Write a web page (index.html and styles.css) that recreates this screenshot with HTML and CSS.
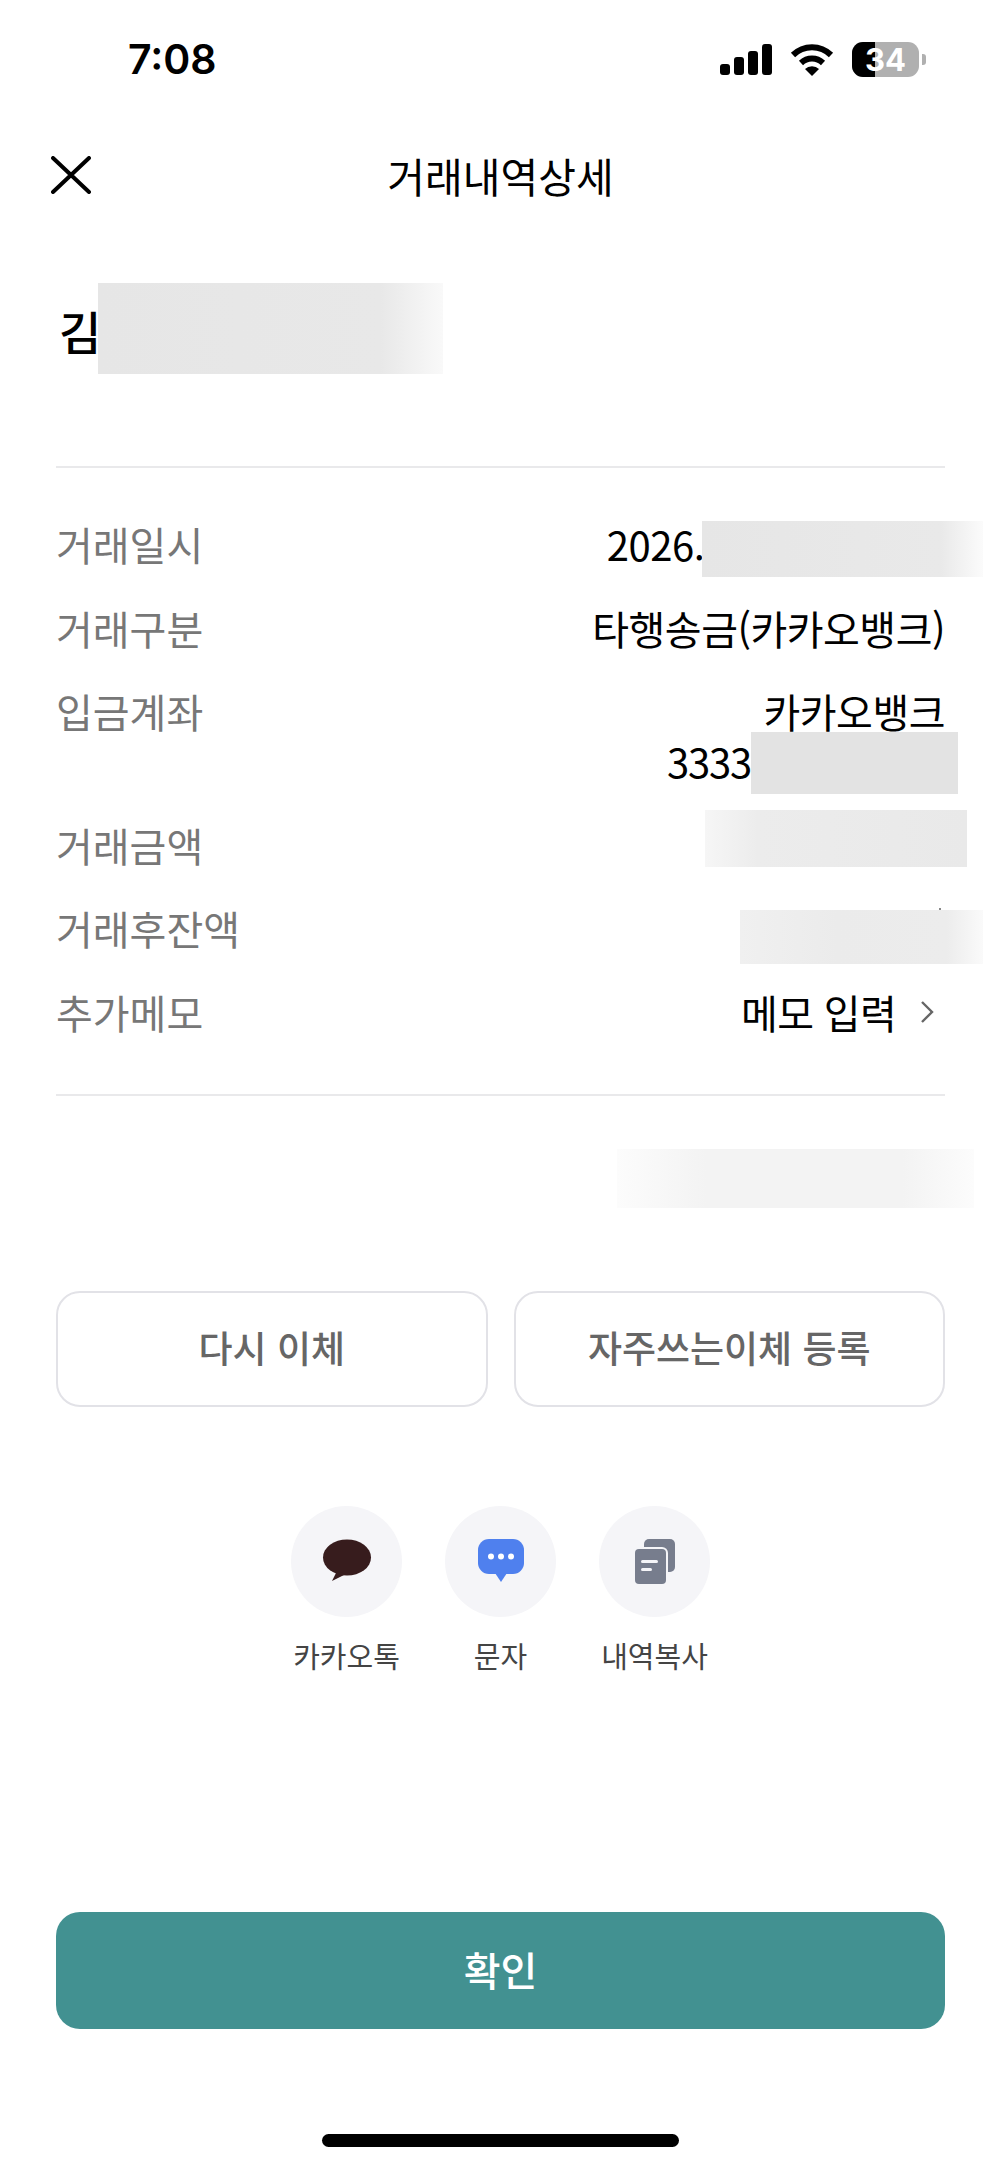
FILE: index.html

```html
<!DOCTYPE html>
<html lang="ko">
<head>
  <meta charset="UTF-8">
  <title>거래내역상세</title>
  <link rel="stylesheet" href="styles.css">
</head>
<body>
  <div class="page">

    <div class="status-bar">
      <span class="time">7:08</span>
      <div class="status-icons">
        <svg class="signal" width="52" height="31" viewBox="0 0 52 31">
          <rect x="0" y="20" width="10" height="11" rx="3"/>
          <rect x="14" y="13" width="10" height="18" rx="3"/>
          <rect x="28" y="7" width="10" height="24" rx="3"/>
          <rect x="42" y="0" width="10" height="31" rx="3"/>
        </svg>
        <svg class="wifi" width="44" height="33" viewBox="0 0 44 33">
          <path d="M3 12 A27 27 0 0 1 41 12" fill="none" stroke="#000" stroke-width="6"/>
          <path d="M11 20 A16 16 0 0 1 33 20" fill="none" stroke="#000" stroke-width="6"/>
          <path d="M15 26 A10 10 0 0 1 29 26 L22 33 Z" fill="#000"/>
        </svg>
        <div class="battery">
          <div class="battery-body">
            <div class="battery-fill"></div>
            <span class="battery-num">34</span>
          </div>
          <div class="battery-nub"></div>
        </div>
      </div>
    </div>

    <div class="header">
      <svg class="close" width="40" height="38" viewBox="0 0 40 38">
        <path d="M2 2 L38 36 M38 2 L2 36" fill="none" stroke="#000" stroke-width="4" stroke-linecap="round"/>
      </svg>
      <h1 class="title">거래내역상세</h1>
    </div>

    <div class="name">김</div>
    <div class="redact redact-name"></div>

    <hr class="line line-top">

    <div class="rows">
      <div class="row">
        <span class="label">거래일시</span>
        <span class="value value-date">2026.0</span>
      </div>
      <div class="row">
        <span class="label">거래구분</span>
        <span class="value">타행송금(카카오뱅크)</span>
      </div>
      <div class="row">
        <span class="label">입금계좌</span>
        <div class="value">
          <div>카카오뱅크</div>
          <div class="value-account">3333</div>
        </div>
      </div>
      <div class="row">
        <span class="label">거래금액</span>
      </div>
      <div class="row">
        <span class="label">거래후잔액</span>
      </div>
      <div class="row">
        <span class="label">추가메모</span>
        <span class="value memo">
          메모 입력
          <svg class="chevron" width="14" height="24" viewBox="0 0 14 24">
            <path d="M2 2 L12 12 L2 22" fill="none" stroke="#666" stroke-width="2.4"/>
          </svg>
        </span>
      </div>
    </div>

    <div class="redact redact-date"></div>
    <div class="redact redact-account"></div>
    <div class="redact redact-amount"></div>
    <div class="redact redact-balance"></div>
    <div class="redact redact-note"></div>

    <hr class="line line-bottom">

    <div class="actions">
      <button class="btn-outline">다시 이체</button>
      <button class="btn-outline">자주쓰는이체 등록</button>
    </div>

    <div class="share">
      <div class="share-item">
        <div class="share-circle">
          <svg width="50" height="44" viewBox="0 0 50 44">
            <ellipse cx="25" cy="18.500" rx="24" ry="18" fill="#371c1d"/>
            <path d="M15 32 L10 42 L24 35 Z" fill="#371c1d"/>
          </svg>
        </div>
        <span class="share-label">카카오톡</span>
      </div>
      <div class="share-item">
        <div class="share-circle">
          <svg width="46" height="44" viewBox="0 0 46 44">
            <rect x="0" y="0" width="46" height="35" rx="11" fill="#4f80ee"/>
            <path d="M17 34 L23 43 L29 34 Z" fill="#4f80ee"/>
            <circle cx="13" cy="17.500" r="3" fill="#fff"/>
            <circle cx="23" cy="17.500" r="3" fill="#fff"/>
            <circle cx="33" cy="17.500" r="3" fill="#fff"/>
          </svg>
        </div>
        <span class="share-label">문자</span>
      </div>
      <div class="share-item">
        <div class="share-circle">
          <svg width="40" height="45" viewBox="0 0 40 45">
            <rect x="9" y="0" width="31" height="33" rx="5" fill="#777d8d"/>
            <rect x="-2" y="8" width="35" height="39" rx="6" fill="#f5f5f8"/>
            <rect x="0" y="10" width="31" height="35" rx="4" fill="#777d8d"/>
            <rect x="6" y="21" width="17" height="3" rx="1.500" fill="#f5f5f8"/>
            <rect x="6" y="29" width="11" height="3" rx="1.500" fill="#f5f5f8"/>
          </svg>
        </div>
        <span class="share-label">내역복사</span>
      </div>
    </div>

    <button class="btn-confirm">확인</button>

    <div class="home-bar"></div>

  </div>
</body>
</html>
```

FILE: styles.css

```css
* {
  box-sizing: border-box;
}
body {
  margin: 0;
  background: #fff;
  font-family: "Noto Sans CJK KR", "Noto Sans", sans-serif;
  color: #000;
}
.page {
  position: relative;
  width: 1000px;
  height: 2165px;
  padding: 0 55px 0 56px;
  overflow: hidden;
}

/* status bar */
.status-bar {
  display: flex;
  align-items: center;
  justify-content: space-between;
  height: 118px;
  margin-right: 19px;
  padding-left: 72px;
}
.time {
  font-family: Inter, sans-serif;
  font-weight: 600;
  font-size: 41px;
}
.status-icons {
  display: flex;
  align-items: center;
  gap: 18px;
}
.battery {
  display: flex;
  align-items: center;
  gap: 3px;
}
.battery-body {
  position: relative;
  width: 67px;
  height: 35px;
  border-radius: 11px;
  background: #b0b0b0;
  overflow: hidden;
  display: flex;
  align-items: center;
  justify-content: center;
}
.battery-fill {
  position: absolute;
  left: 0;
  top: 0;
  bottom: 0;
  width: 23px;
  background: #000;
}
.battery-num {
  position: relative;
  color: #fff;
  font-family: Inter, sans-serif;
  font-weight: 700;
  font-size: 31px;
  line-height: 35px;
}
.battery-nub {
  width: 4px;
  height: 11px;
  border-radius: 0 3px 3px 0;
  background: #b0b0b0;
}

/* header */
.header {
  position: relative;
  display: flex;
  align-items: center;
  justify-content: center;
  height: 114px;
}
.close {
  position: absolute;
  left: -5px;
  top: 38px;
}
.title {
  margin: 0;
  font-size: 41px;
  font-weight: 400;
  line-height: 48px;
}

.name {
  margin-top: 68px;
  padding-left: 3px;
  font-size: 46px;
  font-weight: 500;
  line-height: 60px;
}

.line {
  height: 2px;
  margin: 0;
  border: 0;
  background: #e9e9eb;
}
.line-top {
  margin-top: 106px;
}
.line-bottom {
  margin-top: 57px;
}

/* detail rows */
.rows {
  display: flex;
  flex-direction: column;
  gap: 33.5px;
  margin-top: 51px;
}
.row {
  display: flex;
  justify-content: space-between;
  min-height: 50px;
  font-size: 40px;
  line-height: 50px;
}
.label {
  color: #777;
  white-space: nowrap;
}
.value {
  text-align: right;
  white-space: nowrap;
  letter-spacing: -0.5px;
}
.value-date {
  padding-right: 219px;
}
.value-account {
  padding-right: 194px;
  letter-spacing: -1.2px;
}
.memo {
  display: flex;
  align-items: center;
  gap: 24px;
  padding-right: 11px;
  letter-spacing: -0.7px;
}

/* blurred out parts of the screenshot */
.redact {
  position: absolute;
  background: #e8e8e8;
}
.redact-name {
  left: 98px;
  top: 283px;
  width: 345px;
  height: 91px;
  background: linear-gradient(to right, #e6e6e6 0%, #e8e8e8 82%, #f9f9f9 100%);
}
.redact-date {
  left: 702px;
  top: 521px;
  width: 281px;
  height: 56px;
  background: linear-gradient(to right, #e6e6e6 0%, #e9e9e9 85%, #fbfbfb 100%);
}
.redact-account {
  left: 751px;
  top: 732px;
  width: 207px;
  height: 62px;
  background: #e3e3e3;
}
.redact-amount {
  left: 705px;
  top: 810px;
  width: 262px;
  height: 57px;
  background: linear-gradient(to right, #f6f6f6 0%, #ececec 20%, #e9e9e9 100%);
}
.redact-balance {
  left: 740px;
  top: 910px;
  width: 243px;
  height: 54px;
  background: linear-gradient(to right, #f0f0f0 0%, #ebebeb 40%, #ececec 85%, #fafafa 100%);
}
.redact-balance::before {
  content: "";
  position: absolute;
  left: 199px;
  top: -2px;
  width: 2px;
  height: 2px;
  background: #888;
}
.redact-note {
  left: 617px;
  top: 1149px;
  width: 357px;
  height: 59px;
  background: linear-gradient(to right, #fcfcfc 0%, #f3f3f3 25%, #f3f3f3 80%, #fcfcfc 100%);
}

/* action buttons */
.actions {
  display: flex;
  gap: 26px;
  margin-top: 195px;
}
.btn-outline {
  flex: 1;
  height: 116px;
  padding: 0 0 4px;
  background: #fff;
  border: 2px solid #e2e2e7;
  border-radius: 24px;
  color: #666;
  font-family: inherit;
  font-size: 37px;
  font-weight: 500;
}

/* share */
.share {
  display: flex;
  justify-content: center;
  gap: 43px;
  margin-top: 99px;
}
.share-item {
  display: flex;
  flex-direction: column;
  align-items: center;
  gap: 20px;
  width: 111px;
}
.share-circle {
  display: flex;
  align-items: center;
  justify-content: center;
  width: 111px;
  height: 111px;
  border-radius: 50%;
  background: #f5f5f8;
}
.share-label {
  color: #444;
  font-size: 29px;
  line-height: 36px;
  white-space: nowrap;
}

.btn-confirm {
  display: block;
  width: 100%;
  height: 117px;
  margin-top: 239px;
  padding: 0 0 2px;
  background: #429191;
  border: 0;
  border-radius: 24px;
  color: #fff;
  font-family: inherit;
  font-size: 40px;
  font-weight: 500;
}

.home-bar {
  width: 357px;
  height: 13px;
  margin: 105px auto 0;
  border-radius: 7px;
  background: #000;
}
```
